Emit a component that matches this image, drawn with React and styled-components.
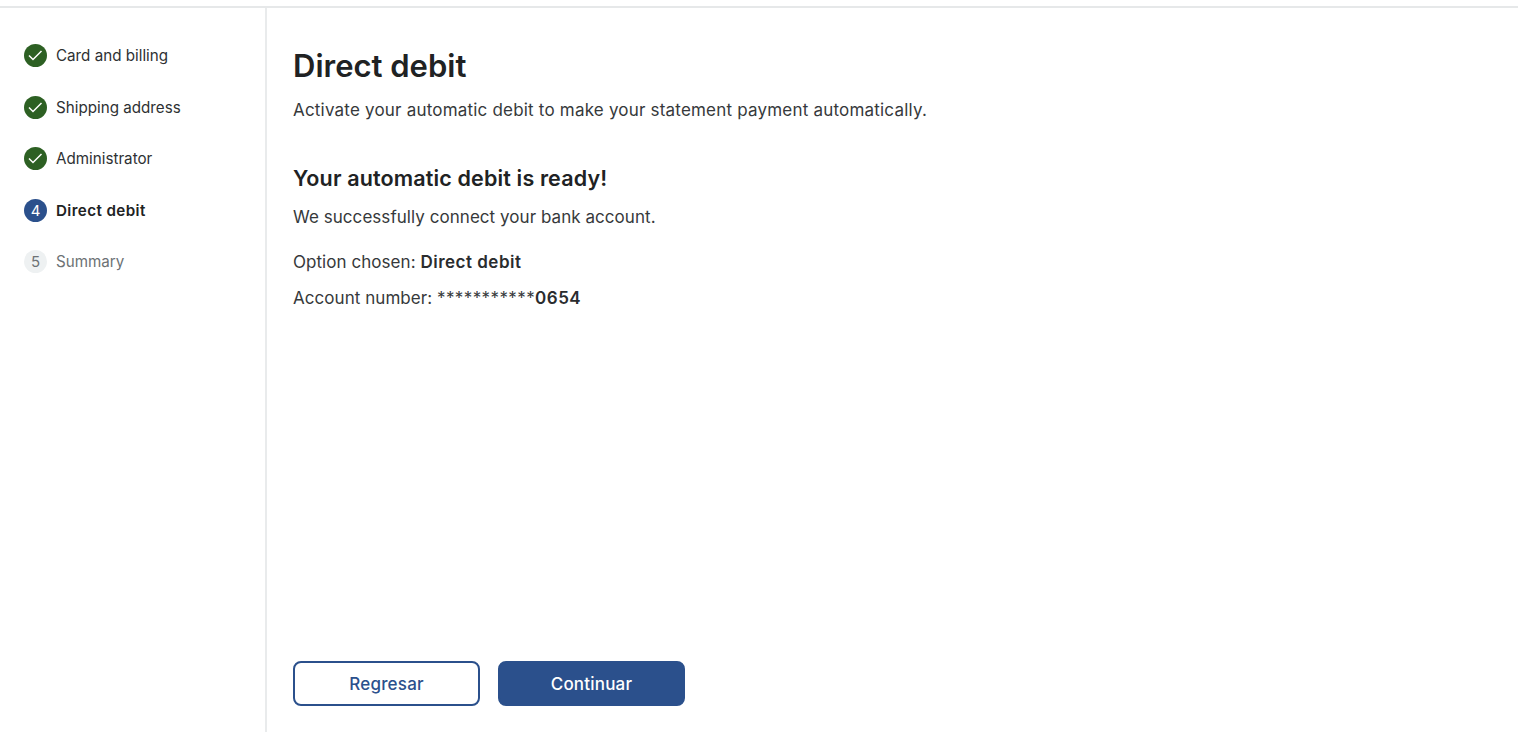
import React from "react";
import styled, { createGlobalStyle } from "styled-components";

const GlobalStyle = createGlobalStyle`
  html, body {
    margin: 0;
    padding: 0;
    background: #fff;
  }
  body {
    font-family: "Inter", "Liberation Sans", sans-serif;
    color: #202223;
  }
`;

const Page = styled.div`
  height: 732px;
  padding-top: 6px;
  box-sizing: border-box;
  display: flex;
  flex-direction: column;
  overflow: hidden;
`;

const Body = styled.div`
  flex: 1;
  display: flex;
  border-top: 2px solid #e6e8e9;
  min-height: 0;
`;

const Sidebar = styled.aside`
  width: 267px;
  flex-shrink: 0;
  box-sizing: border-box;
  border-right: 2px solid #e9ebec;
  padding: 36px 0 0 24px;
  display: flex;
  flex-direction: column;
  gap: 28.6px;
`;

const Step = styled.div`
  height: 23px;
  display: flex;
  align-items: center;
  gap: 9px;
`;

const badgeColors = {
  done: "background: #2d6023; color: #fff;",
  current: "background: #2b508c; color: #fff;",
  pending: "background: #eef1f2; color: #6d7275;",
};

const Badge = styled.span`
  width: 23px;
  height: 23px;
  border-radius: 50%;
  flex-shrink: 0;
  display: flex;
  align-items: center;
  justify-content: center;
  font-size: 15px;
  ${(props) => badgeColors[props.$state]}
`;

const stepTextColors = {
  done: "#2e3133",
  current: "#202223",
  pending: "#6d7275",
};

const StepLabel = styled.span`
  font-size: 15.2px;
  letter-spacing: ${(props) => (props.$state === "current" ? "0.4px" : "0")};
  font-weight: ${(props) => (props.$state === "current" ? 600 : 400)};
  color: ${(props) => stepTextColors[props.$state]};
`;

const Main = styled.main`
  flex: 1;
  padding: 38px 0 26px 26px;
  display: flex;
  flex-direction: column;
`;

const Title = styled.h1`
  margin: 0;
  font-size: 31px;
  line-height: 40px;
  font-weight: 600;
  color: #202223;
`;

const Lead = styled.p`
  margin: 12px 0 0;
  font-size: 17px;
  line-height: 24px;
  letter-spacing: 0.2px;
  color: #36393b;
`;

const Heading = styled.h2`
  margin: 42px 0 0;
  font-size: 21.5px;
  line-height: 28px;
  font-weight: 600;
  letter-spacing: 0.15px;
  color: #202223;
`;

const Text = styled.p`
  margin: ${(props) => props.$top}px 0 0;
  font-size: 17px;
  line-height: 24px;
  letter-spacing: 0.05px;
  color: #36393b;
`;

const Strong = styled.strong`
  font-weight: 600;
  letter-spacing: 0.5px;
  color: #2a2c2e;
`;

const Mask = styled.span`
  letter-spacing: 0.4px;
`;

const Actions = styled.div`
  margin-top: auto;
  display: flex;
  gap: 18px;
`;

const Button = styled.button`
  width: 187px;
  height: 45px;
  box-sizing: border-box;
  border-radius: 8px;
  border: 2px solid #2b508c;
  background: ${(props) => (props.$primary ? "#2b508c" : "#fff")};
  color: ${(props) => (props.$primary ? "#fff" : "#2b508c")};
  font-family: inherit;
  font-size: 17px;
  font-weight: 500;
  letter-spacing: 0.2px;
`;

const Check = () => (
  <svg width="15" height="15" viewBox="0 0 15 15" fill="none">
    <path d="M1 7.5 L5 11.5 L13.5 3" stroke="#fff" strokeWidth="1.5" />
  </svg>
);

const steps = [
  { label: "Card and billing", state: "done" },
  { label: "Shipping address", state: "done" },
  { label: "Administrator", state: "done" },
  { label: "Direct debit", state: "current", num: 4 },
  { label: "Summary", state: "pending", num: 5 },
];

export default function App() {
  return (
    <Page>
      <GlobalStyle />
      <Body>
        <Sidebar>
          {steps.map((s) => (
            <Step key={s.label}>
              <Badge $state={s.state}>{s.num || <Check />}</Badge>
              <StepLabel $state={s.state}>{s.label}</StepLabel>
            </Step>
          ))}
        </Sidebar>
        <Main>
          <Title>Direct debit</Title>
          <Lead>Activate your automatic debit to make your statement payment automatically.</Lead>
          <Heading>Your automatic debit is ready!</Heading>
          <Text $top={13}>We successfully connect your bank account.</Text>
          <Text $top={21}>
            Option chosen: <Strong>Direct debit</Strong>
          </Text>
          <Text $top={12}>
            Account number: <Mask>***********</Mask><Strong>0654</Strong>
          </Text>
          <Actions>
            <Button>Regresar</Button>
            <Button $primary>Continuar</Button>
          </Actions>
        </Main>
      </Body>
    </Page>
  );
}
